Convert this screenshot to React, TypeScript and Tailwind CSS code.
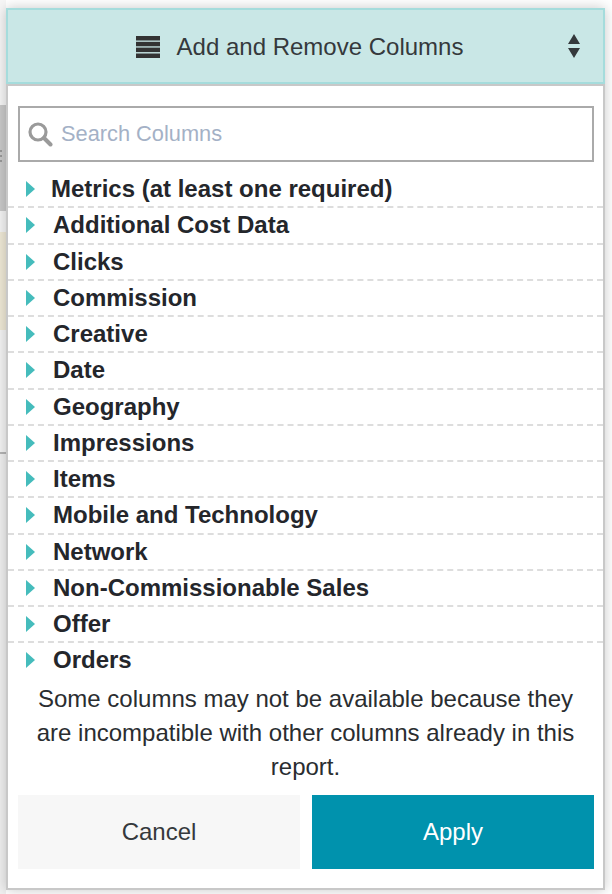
import React from "react";

const rows = ["Additional Cost Data","Clicks","Commission","Creative","Date","Geography","Impressions","Items","Mobile and Technology","Network","Non-Commissionable Sales","Offer","Orders"];

function Tri() {
  return (
    <svg width="9" height="16" viewBox="0 0 9 16" className="shrink-0">
      <path d="M0 0 L9 8 L0 16 Z" fill="#45bcbc" />
    </svg>
  );
}

function Row({ label, first, last }: { label: string; first?: boolean; last?: boolean }) {
  return (
    <div className={`h-[36.25px] flex items-center pl-[18px] border-b-2 border-dashed ${last ? "border-transparent" : "border-[#dddddd]"} ${first ? "gap-[16px]" : "gap-[18px]"}`}>
      <Tri />
      <span className="text-[24px] font-bold text-[#24262b] leading-none whitespace-nowrap">{label}</span>
    </div>
  );
}

export default function App() {
  return (
    <div className="w-[612px] h-[894px] bg-white flex overflow-hidden relative" style={{ fontFamily: '"Liberation Sans", Arial, sans-serif' }}>
      <div className="w-[6px] shrink-0 flex flex-col">
        <div className="h-[105px] bg-[#f6f6f6]" />
        <div className="h-[106px] bg-[#c9c9c9] flex flex-col gap-[3px] pt-[45px]">
          <div className="w-[2px] h-[2px] bg-[#999999]" />
          <div className="w-[2px] h-[2px] bg-[#999999]" />
          <div className="w-[2px] h-[2px] bg-[#999999]" />
        </div>
        <div className="h-[21px] bg-[#f4f4f4]" />
        <div className="h-[98px] bg-[#efe9d6]" />
        <div className="h-[122px] bg-[#f4f4f4]" />
        <div className="h-[2px] bg-[#b5b5b5]" />
        <div className="flex-1 bg-[#f0f0f0]" />
      </div>
      <div className="w-[599px] h-[882px] mt-[8px] flex flex-col bg-white border-x-2 border-b-2 border-[#c8c8c8] shadow-[0_0_12px_rgba(0,0,0,0.22)] box-border">
        <div className="-mx-[2px] h-[75.5px] shrink-0 bg-[#c9e7e6] border-2 border-[#a5dcdc] flex items-center relative">
          <div className="w-full flex items-center justify-center gap-[17px] pr-[12px] pt-[2px]">
            <svg width="24" height="22" viewBox="0 0 24 22" className="text-[#333333]">
              <g fill="currentColor">
                <rect x="0" y="0" width="24" height="4.5" />
                <rect x="0" y="5.8" width="24" height="4.5" />
                <rect x="0" y="11.6" width="24" height="4.5" />
                <rect x="0" y="17.5" width="24" height="4.5" />
              </g>
            </svg>
            <span className="text-[24px] text-[#35393c] leading-none">Add and Remove Columns</span>
          </div>
          <svg width="12" height="24" viewBox="0 0 12 24" className="absolute right-[23px] top-[24px]">
            <path d="M6 0 L12 10 L0 10 Z M0 14 L12 14 L6 24 Z" fill="#35393c" />
          </svg>
        </div>
        <div className="h-[2px] shrink-0 -mx-[2px] bg-[#c8c8c8]" />
        <div className="mt-[20.5px] ml-[10px] mr-[9px] h-[56px] shrink-0 border-2 border-[#aaaaaa] flex items-center pl-[8px] gap-[8px]">
          <svg width="25" height="25" viewBox="0 0 25 25" fill="none" stroke="#9a9a9a">
            <circle cx="10" cy="10" r="8" strokeWidth="3.2" />
            <path d="M16 16 L22.5 22.5" strokeWidth="4" strokeLinecap="round" />
          </svg>
          <span className="text-[21.8px] text-[#a4b1c6] leading-none">Search Columns</span>
        </div>
        <div className="mt-[10px] shrink-0">
          <Row label="Metrics (at least one required)" first />
          {rows.map((r, i) => <Row key={r} label={r} last={i === rows.length - 1} />)}
        </div>
        <p className="mt-[2px] px-[20px] text-center text-[24px] leading-[34px] text-[#2a2d30]">
          Some columns may not be available because they are incompatible with other columns already in this report.
        </p>
        <div className="mt-[11px] ml-[10px] mr-[9px] flex gap-[12px]">
          <div className="flex-1 h-[74px] bg-[#f7f7f7] flex items-center justify-center text-[24px] text-[#35393c]">Cancel</div>
          <div className="flex-1 h-[74px] bg-[#0092ad] flex items-center justify-center text-[24px] text-white">Apply</div>
        </div>
      </div>
    </div>
  );
}
